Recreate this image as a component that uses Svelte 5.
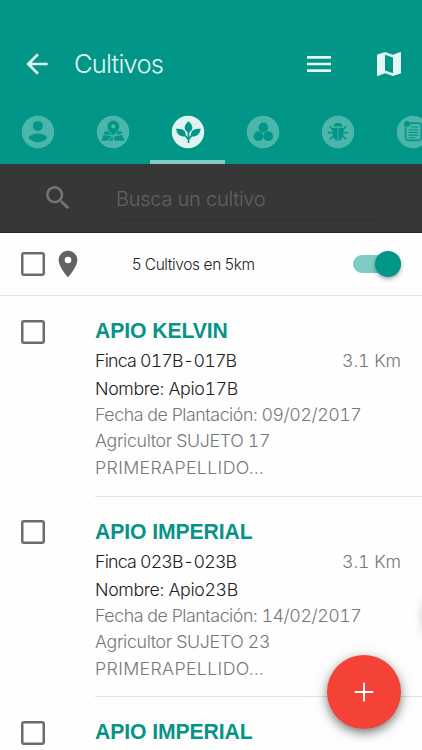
<script lang="ts">

	interface Crop {
		title: string,
		farm?: string,
		name?: string,
		planted?: string,
		farmer?: string,
		distance?: string
	}

	const crops: Crop[] = [
		{
			title: "APIO KELVIN",
			farm: "017B-017B",
			name: "Apio17B",
			planted: "09/02/2017",
			farmer: "SUJETO 17",
			distance: "3.1 Km"
		},
		{
			title: "APIO IMPERIAL",
			farm: "023B-023B",
			name: "Apio23B",
			planted: "14/02/2017",
			farmer: "SUJETO 23",
			distance: "3.1 Km"
		},
		{
			title: "APIO IMPERIAL"
		}
	]

	const tabs = ["farmer", "farm", "crop", "product", "pest", "report"]

	let activeTab = "crop"
	let search = ""
	let nearby = true
	let allSelected = false
	let selected: boolean[] = crops.map(() => false)

	function toggleAll() {
		allSelected = !allSelected
		selected = crops.map(() => allSelected)
	}

	function toggle(index: number) {
		selected = selected.map((value, i) => i === index ? !value : value)
	}
</script>

<main>
	<header>
		<div class="toolbar">
			<button class="icon back" aria-label="Volver">
				<svg width="32" height="32" viewBox="0 0 24 24"><path d="M20 11H7.83l5.59-5.59L12 4l-8 8 8 8 1.41-1.41L7.83 13H20v-2z" /></svg>
			</button>
			<h1>Cultivos</h1>
			<button class="icon menu" aria-label="Menú">
				<svg width="32" height="32" viewBox="0 0 24 24"><path d="M3 18h18v-2H3v2zm0-5h18v-2H3v2zm0-7v2h18V6H3z" /></svg>
			</button>
			<button class="icon map" aria-label="Mapa">
				<svg width="32" height="32" viewBox="0 0 24 24"><path d="M20.5 3l-.16.03L15 5.1 9 3 3.36 4.9c-.21.07-.36.25-.36.48V20.5c0 .28.22.5.5.5l.16-.03L9 18.9l6 2.1 5.64-1.9c.21-.07.36-.25.36-.48V3.5c0-.28-.22-.5-.5-.5zM15 19l-6-2.11V5l6 2.11V19z" /></svg>
			</button>
		</div>
		<nav>
			{#each tabs as tab}
				<button class="tab" class:active={activeTab === tab} aria-label={tab} on:click={() => activeTab = tab}>
					<svg width="34" height="34" viewBox="0 0 34 34">
						<circle class="disc" cx="17" cy="17" r="16.2" />
						{#if tab === "farmer"}
							<circle cx="16.8" cy="10.9" r="5" />
							<path d="M7.4 22.6c4-5.4 15-5.4 19 0-4 6.4-15 6.4-19 0z" />
						{:else if tab === "farm"}
							<path d="M17.3 5.6a6 6 0 0 0-6 6c0 3.9 6 8.8 6 8.8s6-4.9 6-8.8a6 6 0 0 0-6-6zm0 3.7a2.1 2.1 0 1 1 0 4.2 2.1 2.1 0 0 1 0-4.2z" fill-rule="evenodd" />
							<path d="M8.8 16.2h3.4l3.4 4-7.9-1zM7.4 20l8.6 1.3-5.2 4.5H5.5zM17.8 21.7l8.2-1.9 2.8 5.9H18.5zM22 16.2l3.4.3.9 2.1-6.5 1.5zM12 25.8l4.6-4 .6 4z" />
						{:else if tab === "crop"}
							<path d="M17.5 6.2c5.1 4.1 5.1 9 0 11.7-5.1-2.7-5.1-7.6 0-11.7z" />
							<path d="M5.1 13.8c6.7-.9 10.6 2.2 9.7 7.7-5.3.6-8.9-1.8-9.7-7.7zM29.7 13.8c-6.7-.9-10.6 2.2-9.7 7.7 5.3.6 8.9-1.8 9.7-7.7z" />
							<path class="line" d="M17.5 17v11M14.4 20.8l3.1 3.7 3.1-3.7" />
						{:else if tab === "product"}
							<circle cx="17.4" cy="12.5" r="4.9" />
							<circle cx="12.4" cy="21.2" r="4.9" />
							<circle cx="22.2" cy="21.2" r="4.9" />
						{:else if tab === "pest"}
							<path d="M12.6 11.6a4.4 3.5 0 0 1 8.8 0z" />
							<path d="M11.8 12.7h4.8v13.2c-2.8-.8-4.3-3.3-4.8-7zM17.4 12.7h4.8v6.2c-.5 3.700-2 6.200-4.800 7z" />
							<path class="line" d="M12.4 15.300L8.800 11.300M7 17.600h5M12.800 20.300l-3.800 4.200M21.600 15.300l3.600-4M27 17.600h-5M21.200 20.300l3.800 4.200" />
						{:else}
							<circle cx="11" cy="9" r="3" />
							<path class="line" d="M14 8.2h8q3.4 0 3.4 3.4V22q0 3.4-3.4 3.4H13Q9.6 25.4 9.6 22V12.5" />
							<path class="rule" d="M14.5 12h8M12.5 14.7h10M12.5 17.4h10M12.5 20.1h10M12.5 22.7h7" />
						{/if}
					</svg>
				</button>
			{/each}
		</nav>
	</header>

	<section class="search">
		<svg width="32" height="32" viewBox="0 0 24 24"><path d="M15.5 14h-.79l-.28-.27A6.471 6.471 0 0 0 16 9.5 6.5 6.5 0 1 0 9.5 16c1.61 0 3.09-.59 4.23-1.57l.27.28v.79l5 4.99L20.49 19l-4.99-5zm-6 0C7.01 14 5 11.99 5 9.5S7.01 5 9.5 5 14 7.01 14 9.5 11.99 14 9.5 14z" /></svg>
		<input type="text" placeholder="Busca un cultivo" bind:value={search} />
	</section>

	<section class="filter">
		<button class="check" class:checked={allSelected} aria-label="Seleccionar todos" on:click={toggleAll}></button>
		<svg class="pin" width="32" height="32" viewBox="0 0 24 24"><path d="M12 2C8.13 2 5 5.13 5 9c0 5.25 7 13 7 13s7-7.75 7-13c0-3.87-3.13-7-7-7zm0 9.5a2.5 2.5 0 0 1 0-5 2.5 2.5 0 0 1 0 5z" /></svg>
		<span class="count">5 Cultivos en 5km</span>
		<button class="switch" class:on={nearby} aria-label="Cultivos cercanos" on:click={() => nearby = !nearby}>
			<span class="knob"></span>
		</button>
	</section>

	<ul>
		{#each crops as crop, i}
			<li>
				<button class="check" class:checked={selected[i]} aria-label={crop.title} on:click={() => toggle(i)}></button>
				<div class="details">
					<h2>{crop.title}</h2>
					{#if crop.farm}
						<div class="row">
							<p class="main">Finca {crop.farm}</p>
							<span class="distance">{crop.distance}</span>
						</div>
						<p class="main">Nombre: {crop.name}</p>
						<p class="date">Fecha de Plantación: {crop.planted}</p>
						<p>Agricultor {crop.farmer}</p>
						<p class="surname">PRIMERAPELLIDO…</p>
					{/if}
				</div>
			</li>
		{/each}
	</ul>

	<span class="edge"></span>
	<button class="add" aria-label="Añadir cultivo">
		<svg width="32" height="32" viewBox="0 0 24 24"><path d="M19 12.7h-6.3V19h-1.4v-6.3H5v-1.4h6.3V5h1.4v6.3H19z" /></svg>
	</button>
</main>

<style>

	:global(body) {
		margin: 0;
	}

	main {
		position: relative;
		display: flex;
		flex-direction: column;
		height: 750px;
		overflow: hidden;
		background-color: #fefefe;
		font-family: Inter, "Liberation Sans", sans-serif;
		font-weight: 300;
	}

	button {
		border: 0;
		padding: 0;
		background: none;
		cursor: pointer;
		flex: none;
	}

	svg {
		display: block;
		flex: none;
	}

	h1, h2, p, ul {
		margin: 0;
		padding: 0;
	}

	header {
		flex: none;
		height: 164px;
		box-sizing: border-box;
		padding-top: 27px;
		background-color: #029688;
	}

	.toolbar {
		display: flex;
		align-items: center;
		height: 73px;
		padding: 0 17px 0 21px;
	}

	.icon svg {
		fill: #e2f6f3;
	}

	h1 {
		flex: 1;
		margin-left: 21px;
		font-size: 25.5px;
		font-weight: 300;
		letter-spacing: -0.8px;
		color: #e0f3f1;
	}

	.map {
		margin-left: 38px;
	}

	nav {
		display: flex;
		height: 64px;
		overflow: hidden;
	}

	.tab {
		display: flex;
		justify-content: center;
		width: 75px;
		height: 64px;
		box-sizing: border-box;
		padding-top: 15px;
	}

	.tab svg {
		fill: #029688;
	}

	.tab .disc {
		fill: #4db6ab;
	}

	.tab.active {
		border-bottom: 4px solid #80cbc4;
	}

	.tab.active .disc {
		fill: #e0f3f1;
	}

	.line {
		fill: none;
		stroke: #029688;
		stroke-width: 1.7;
	}

	.rule {
		stroke: #029688;
		stroke-width: 1.1;
	}

	.search {
		flex: none;
		display: flex;
		align-items: center;
		height: 69px;
		box-sizing: border-box;
		padding: 0 44px 0 42px;
		background-color: #373737;
		border-bottom: 1px solid #292929;
	}

	.search svg {
		fill: #747474;
	}

	.search input {
		flex: 1;
		min-width: 0;
		height: 44px;
		margin: 2px 0 0 42px;
		padding: 0;
		box-sizing: border-box;
		border: 0;
		border-bottom: 1px solid #313131;
		outline: 0;
		background: none;
		font: inherit;
		font-size: 20px;
		letter-spacing: -0.25px;
		color: #ccc;
	}

	.search input::placeholder {
		color: #626262;
		opacity: 1;
	}

	.filter {
		flex: none;
		display: flex;
		align-items: center;
		height: 63px;
		box-sizing: border-box;
		padding: 0 21px;
		border-bottom: 1px solid #e3e3e3;
	}

	.check {
		width: 24px;
		height: 24px;
		box-sizing: border-box;
		border: 2px solid #6b6b6b;
		border-radius: 3px;
		box-shadow: inset 0 0 0 0.5px #6b6b6b;
	}

	.check.checked {
		background-color: #029688;
		border-color: #029688;
	}

	.pin {
		margin-left: 7px;
		fill: #626262;
	}

	.count {
		flex: 1;
		margin-left: 48px;
		font-size: 15.5px;
		letter-spacing: -0.4px;
		color: #222;
	}

	.switch {
		display: flex;
		align-items: center;
		width: 48px;
		height: 18px;
		border-radius: 9px;
		background-color: #bdbdbd;
	}

	.switch.on {
		justify-content: flex-end;
		background-color: #80cbc4;
	}

	.knob {
		width: 26.5px;
		height: 26.5px;
		border-radius: 50%;
		background-color: #fafafa;
		box-shadow: 0 2px 4px rgba(0, 0, 0, 0.35);
	}

	.switch.on .knob {
		background-color: #029688;
	}

	ul {
		list-style: none;
	}

	li {
		display: flex;
		height: 200.7px;
		padding-left: 21px;
	}

	li .check {
		margin-top: 23.5px;
	}

	.details {
		flex: 1;
		margin-left: 50px;
		padding-top: 20px;
		box-sizing: border-box;
		border-bottom: 1px solid #e3e3e3;
	}

	h2 {
		font-family: "Liberation Sans", sans-serif;
		font-size: 21.2px;
		line-height: 30px;
		font-weight: 700;
		letter-spacing: -0.1px;
		color: #079486;
	}

	.row {
		display: flex;
		justify-content: space-between;
		padding-right: 21px;
	}

	p, .distance {
		font-size: 17.8px;
		line-height: 26.4px;
		letter-spacing: -0.35px;
		font-variant-numeric: tabular-nums;
		color: #777;
	}

	.distance {
		line-height: 29px;
		letter-spacing: -0.1px;
	}

	.main {
		line-height: 27px;
		color: #222;
	}

	.row .main {
		line-height: 29px;
		letter-spacing: -0.8px;
	}

	.date {
		letter-spacing: -0.46px;
	}

	.surname {
		letter-spacing: 0.35px;
	}

	.edge {
		position: absolute;
		top: 585px;
		left: 424px;
		width: 60px;
		height: 60px;
		border-radius: 50%;
		box-shadow: 0 2px 12px rgba(0, 0, 0, 0.3);
	}

	.add {
		position: absolute;
		top: 655px;
		left: 327px;
		display: flex;
		align-items: center;
		justify-content: center;
		width: 74px;
		height: 74px;
		border-radius: 50%;
		background-color: #f44336;
		box-shadow: 0 4px 10px rgba(0, 0, 0, 0.45), 0 2px 20px rgba(0, 0, 0, 0.1);
	}

	.add svg {
		fill: #fff;
	}
</style>
